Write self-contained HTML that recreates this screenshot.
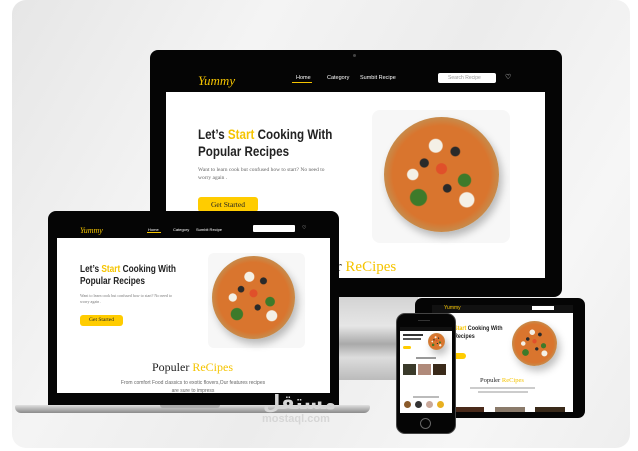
<!DOCTYPE html>
<html><head><meta charset="utf-8"><style>
*{margin:0;padding:0;box-sizing:border-box}
body{width:638px;height:451px;background:#fff;position:relative;overflow:hidden;font-family:"Liberation Sans",sans-serif}
.a{position:absolute}
.card{left:12px;top:0;width:618px;height:448px;border-radius:14px;background:linear-gradient(120deg,#e6e6e6 0%,#f4f4f4 30%,#ececec 55%,#f6f6f6 80%,#eee 100%)}
.blk{background:#050505}
.pz{border-radius:50%;background:
radial-gradient(circle at 35% 40%,#2a2a2a 0 4%,transparent 5%),
radial-gradient(circle at 62% 30%,#2a2a2a 0 4%,transparent 5%),
radial-gradient(circle at 55% 62%,#2a2a2a 0 4%,transparent 5%),
radial-gradient(circle at 30% 70%,#3d7a2a 0 7%,transparent 8%),
radial-gradient(circle at 70% 55%,#3d7a2a 0 6%,transparent 7%),
radial-gradient(circle at 45% 25%,#f4f0e6 0 6%,transparent 7%),
radial-gradient(circle at 72% 72%,#f4f0e6 0 6%,transparent 7%),
radial-gradient(circle at 25% 50%,#f4f0e6 0 5%,transparent 6%),
radial-gradient(circle at 50% 45%,#e0502a 0 6%,transparent 7%),
radial-gradient(circle,#d9752e 0 60%,#c88a4a 70%,#d9a86a 85%,#b07a48 100%);box-shadow:3px 5px 8px rgba(0,0,0,.25)}
.y{color:#f5c400}
.btn{background:#ffcc00;border-radius:3px;color:#222;font-family:"Liberation Serif",serif;text-align:center}
.h{font-family:"Liberation Sans",sans-serif;font-weight:bold;color:#222;transform-origin:0 0;white-space:nowrap}
</style></head><body>
<div class="a card"></div>

<div class="a" style="left:336px;top:290px;width:82px;height:90px;background:linear-gradient(#cfcfcf,#e6e6e6 40%,#a9a9a9 60%,#ddd 75%,#bbb)"></div>

<div class="a blk" style="left:150px;top:50px;width:412px;height:247px;border-radius:8px"></div>
<div class="a" style="left:353px;top:54px;width:3px;height:3px;border-radius:50%;background:#444"></div>
<div class="a" style="left:166px;top:92px;width:379px;height:186px;background:#fff"></div>
<div class="a" style="left:198px;top:73px;font-size:13px;color:#f5c400;font-family:'Liberation Serif',serif;font-style:italic">Yummy</div>
<div class="a" style="left:296px;top:75px;font-size:5.5px;color:#fff">Home</div>
<div class="a" style="left:292px;top:82px;width:20px;height:1px;background:#f5c400"></div>
<div class="a" style="left:327px;top:75px;font-size:5.5px;color:#fff">Category</div>
<div class="a" style="left:360px;top:75px;font-size:5.5px;color:#fff">Sumbit Recipe</div>
<div class="a" style="left:438px;top:73px;width:58px;height:10px;background:#fff;border-radius:2px;font-size:5px;color:#999;padding:2px 0 0 10px">Search Recipe</div>
<div class="a" style="left:505px;top:73px;font-size:7px;color:#fff">♡</div>
<div class="a h" style="left:198px;top:126px;font-size:14px;line-height:16.5px;transform:scaleX(.83)">Let’s <span class="y">Start</span> Cooking With<br>Popular Recipes</div>
<div class="a" style="left:198px;top:167px;width:130px;font-size:5.5px;line-height:7.5px;color:#666;font-family:'Liberation Serif',serif">Want to learn cook but confused how to start? No need to worry again .</div>
<div class="a btn" style="left:198px;top:197px;width:60px;height:15px;font-size:7.5px;line-height:15px">Get Started</div>
<div class="a" style="left:372px;top:110px;width:138px;height:133px;background:#f7f7f7;border-radius:8px"></div>
<div class="a pz" style="left:384px;top:117px;width:115px;height:115px"></div>
<div class="a" style="left:330px;top:259px;font-size:15px;color:#222;font-family:'Liberation Serif',serif">er <span class="y">ReCipes</span></div>

<div class="a blk" style="left:48px;top:211px;width:291px;height:196px;border-radius:8px 8px 0 0"></div>
<div class="a" style="left:57px;top:238px;width:273px;height:155px;background:#fff"></div>
<div class="a" style="left:80px;top:226px;font-size:8px;color:#f5c400;font-family:'Liberation Serif',serif;font-style:italic">Yummy</div>
<div class="a" style="left:148px;top:227px;font-size:4px;color:#fff">Home</div>
<div class="a" style="left:147px;top:232px;width:14px;height:1px;background:#f5c400"></div>
<div class="a" style="left:173px;top:227px;font-size:4px;color:#fff">Category</div>
<div class="a" style="left:196px;top:227px;font-size:4px;color:#fff">Sumbit Recipe</div>
<div class="a" style="left:253px;top:225px;width:42px;height:7px;background:#fff;border-radius:1px"></div>
<div class="a" style="left:302px;top:225px;font-size:5px;color:#fff">♡</div>
<div class="a h" style="left:80px;top:264px;font-size:10px;line-height:12px;transform:scaleX(.83)">Let’s <span class="y">Start</span> Cooking With<br>Popular Recipes</div>
<div class="a" style="left:80px;top:293px;width:95px;font-size:4px;line-height:5.5px;color:#777;font-family:'Liberation Serif',serif">Want to learn cook but confused how to start? No need to worry again .</div>
<div class="a btn" style="left:80px;top:315px;width:43px;height:11px;font-size:5.5px;line-height:11px">Get Started</div>
<div class="a" style="left:208px;top:253px;width:97px;height:95px;background:#f7f7f7;border-radius:6px"></div>
<div class="a pz" style="left:212px;top:256px;width:83px;height:83px"></div>
<div class="a" style="left:152px;top:360px;font-size:12px;color:#222;font-family:'Liberation Serif',serif">Populer <span class="y">ReCipes</span></div>
<div class="a" style="left:118px;top:379px;width:150px;text-align:center;font-size:5px;line-height:8px;color:#666">From comfort Food classics to exotic flovers,Our features recipes are sure to impress</div>
<div class="a" style="left:15px;top:405px;width:355px;height:8px;border-radius:2px 2px 6px 6px;background:linear-gradient(#e0e0e0,#8a8a8a)"></div>
<div class="a" style="left:160px;top:405px;width:60px;height:3px;background:#aaa;border-radius:0 0 3px 3px"></div>

<div class="a" style="left:263px;top:390px;font-size:20px;color:#d6d6d6;font-weight:bold;font-family:'DejaVu Sans',sans-serif">مستقل</div>
<div class="a" style="left:262px;top:413px;font-size:11px;color:#d6d6d6;font-weight:bold">mostaql.com</div>

<div class="a blk" style="left:415px;top:298px;width:170px;height:120px;border-radius:7px"></div>
<div class="a" style="left:432px;top:313px;width:141px;height:99px;background:#fff"></div>
<div class="a" style="left:432px;top:305px;width:141px;height:8px;background:#111"></div>
<div class="a" style="left:444px;top:305px;font-size:5px;color:#f5c400">Yummy</div>
<div class="a" style="left:532px;top:306px;width:22px;height:4px;background:#fff"></div>
<div class="a h" style="left:454px;top:325px;font-size:6.5px;line-height:8px;transform:scaleX(.83)"><span class="y">Start</span> Cooking With<br>Recipes</div>
<div class="a btn" style="left:450px;top:353px;width:16px;height:6px"></div>
<div class="a pz" style="left:512px;top:321px;width:45px;height:45px"></div>
<div class="a" style="left:480px;top:377px;font-size:6.5px;color:#222;font-family:'Liberation Serif',serif">Populer <span class="y">ReCipes</span></div>
<div class="a" style="left:470px;top:387px;width:65px;height:2px;background:#ccc"></div>
<div class="a" style="left:478px;top:391px;width:50px;height:2px;background:#ccc"></div>
<div class="a" style="left:454px;top:407px;width:30px;height:5px;background:#4a2a1a"></div>
<div class="a" style="left:495px;top:407px;width:30px;height:5px;background:#8a7a6a"></div>
<div class="a" style="left:535px;top:407px;width:30px;height:5px;background:#3a2a1a"></div>

<div class="a blk" style="left:396px;top:313px;width:60px;height:121px;border-radius:9px;border:1px solid #444"></div>
<div class="a" style="left:400px;top:327px;width:52px;height:86px;background:#fff"></div>
<div class="a" style="left:400px;top:327px;width:52px;height:4px;background:#111"></div>
<div class="a" style="left:418px;top:320px;width:12px;height:1px;background:#333"></div>
<div class="a" style="left:420px;top:418px;width:11px;height:11px;border-radius:50%;border:1px solid #666"></div>
<div class="a" style="left:403px;top:334px;width:20px;height:2px;background:#333"></div>
<div class="a" style="left:403px;top:338px;width:18px;height:2px;background:#555"></div>
<div class="a btn" style="left:403px;top:346px;width:8px;height:3px"></div>
<div class="a pz" style="left:428px;top:333px;width:17px;height:17px"></div>
<div class="a" style="left:416px;top:357px;width:20px;height:2px;background:#999"></div>
<div class="a" style="left:403px;top:364px;width:13px;height:11px;background:#3a3a2a"></div>
<div class="a" style="left:418px;top:364px;width:13px;height:11px;background:#b08a7a"></div>
<div class="a" style="left:433px;top:364px;width:13px;height:11px;background:#3a2a1a"></div>
<div class="a" style="left:413px;top:396px;width:26px;height:2px;background:#bbb"></div>
<div class="a" style="left:404px;top:401px;width:7px;height:7px;border-radius:50%;background:#8a5a2a"></div>
<div class="a" style="left:415px;top:401px;width:7px;height:7px;border-radius:50%;background:#333"></div>
<div class="a" style="left:426px;top:401px;width:7px;height:7px;border-radius:50%;background:#c9a89a"></div>
<div class="a" style="left:437px;top:401px;width:7px;height:7px;border-radius:50%;background:#e8b020"></div>
</body></html>
